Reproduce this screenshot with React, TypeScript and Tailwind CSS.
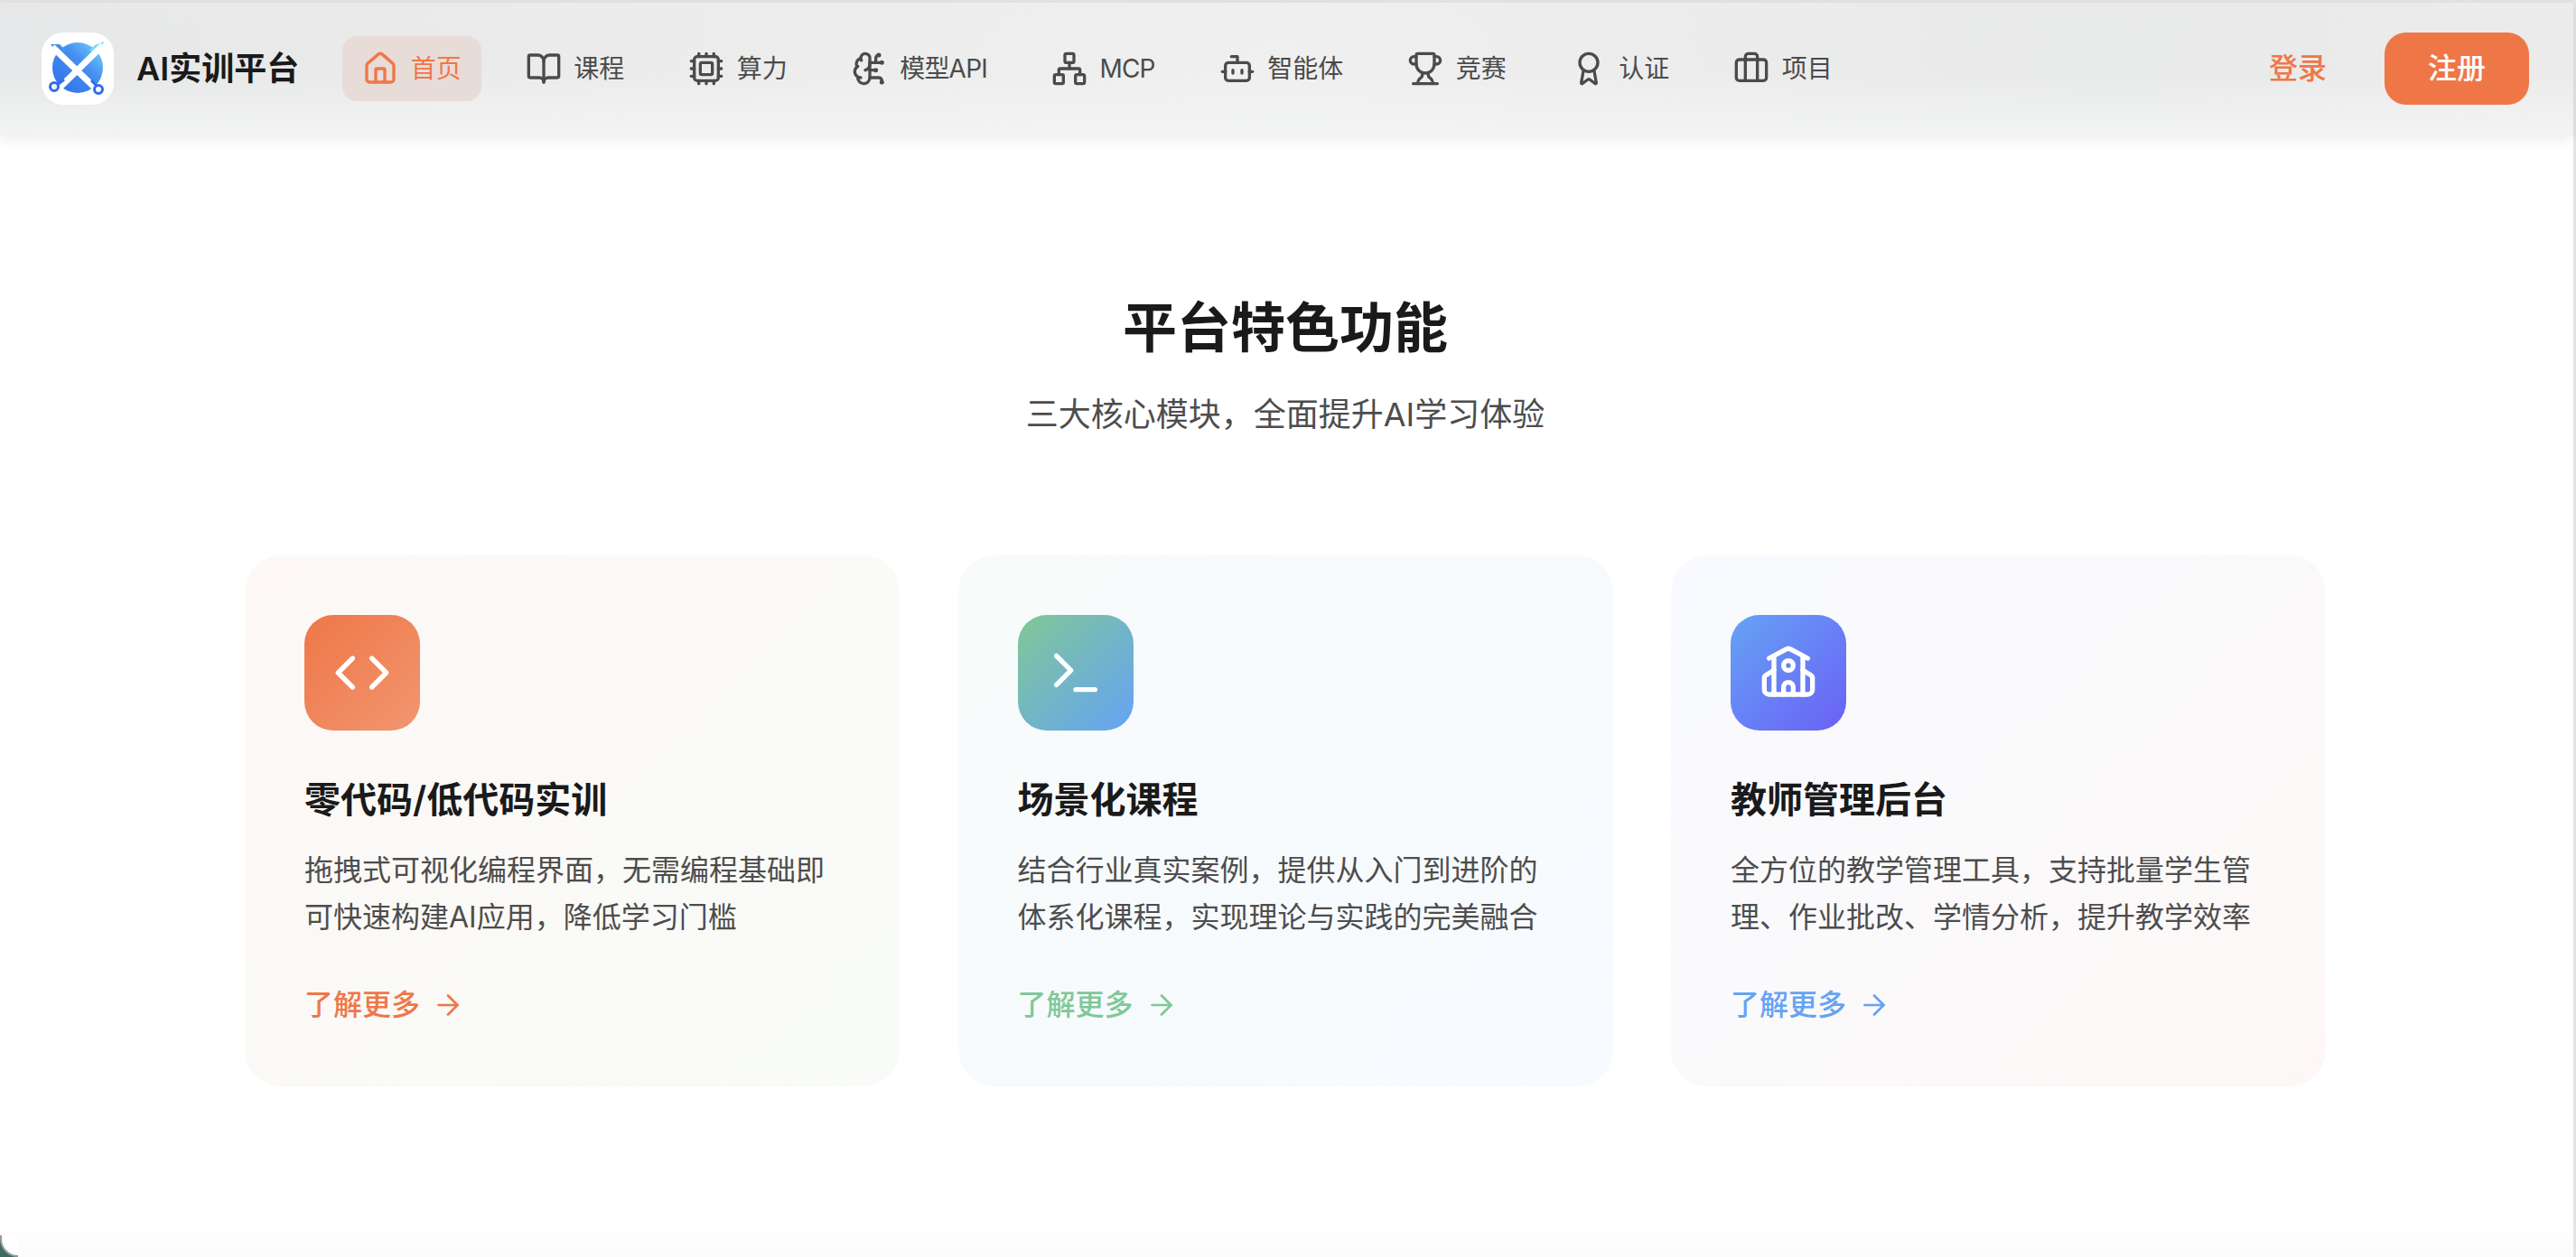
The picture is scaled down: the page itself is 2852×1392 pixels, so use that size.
import { House, BookOpen, Cpu, BrainCircuit, Network, Bot, Trophy, Award, Briefcase, Code, Terminal, School, ArrowRight } from "lucide-react";

const navItems = [
  { label: "首页", icon: House, active: true },
  { label: "课程", icon: BookOpen },
  { label: "算力", icon: Cpu },
  { label: "模型API", icon: BrainCircuit, narrow: true },
  { label: "MCP", icon: Network, narrow: true },
  { label: "智能体", icon: Bot },
  { label: "竞赛", icon: Trophy },
  { label: "认证", icon: Award },
  { label: "项目", icon: Briefcase },
];

const cards = [
  {
    title: "零代码/低代码实训",
    lines: ["拖拽式可视化编程界面，无需编程基础即", "可快速构建AI应用，降低学习门槛"],
    icon: Code,
    cardClass: "bg-[linear-gradient(135deg,#fdf8f6,#f8fbf8)]",
    iconClass: "bg-[linear-gradient(135deg,#ef7747,#f19670)]",
    linkClass: "text-[#ef7747]",
  },
  {
    title: "场景化课程",
    lines: ["结合行业真实案例，提供从入门到进阶的", "体系化课程，实现理论与实践的完美融合"],
    icon: Terminal,
    cardClass: "bg-[linear-gradient(135deg,#f8fbfa,#f7faff)]",
    iconClass: "bg-[linear-gradient(135deg,#80c896,#65a3f5)]",
    linkClass: "text-[#7fc898]",
  },
  {
    title: "教师管理后台",
    lines: ["全方位的教学管理工具，支持批量学生管", "理、作业批改、学情分析，提升教学效率"],
    icon: School,
    cardClass: "bg-[linear-gradient(135deg,#f8faff,#fdf8f6)]",
    iconClass: "bg-[linear-gradient(135deg,#65a3f5,#6b60f6)]",
    linkClass: "text-[#65a3f5]",
  },
];

function Logo() {
  return (
    <div className="flex h-[80px] w-[80px] shrink-0 items-center justify-center rounded-[24px] bg-white">
      <svg width="80" height="80" viewBox="0 0 80 80">
        <defs>
          <linearGradient id="logoBlue" x1="1" y1="0" x2="0" y2="1">
            <stop offset="0" stopColor="#7adcf8" />
            <stop offset="0.4" stopColor="#4590f0" />
            <stop offset="1" stopColor="#2f6de8" />
          </linearGradient>
        </defs>
        <circle cx="40" cy="39" r="28" fill="url(#logoBlue)" />
        <polygon points="10,13 20,13 27,20 18,24" fill="#4590f0" />
        <polygon points="69,10 59,14 53,20 63,24" fill="#7adcf8" />
        <path d="M12 16 L61 63" stroke="#fff" strokeWidth="7" fill="none" />
        <path d="M68 14 L18 63" stroke="#fff" strokeWidth="7" fill="none" />
        <path d="M25 52 L16 59" stroke="#2f6de8" strokeWidth="3" fill="none" />
        <path d="M55 53 L62 60" stroke="#2f6de8" strokeWidth="3" fill="none" />
        <circle cx="14" cy="60" r="4.5" fill="#fff" stroke="#2f6de8" strokeWidth="3" />
        <circle cx="63" cy="63" r="4.5" fill="#fff" stroke="#2f6de8" strokeWidth="3" />
      </svg>
    </div>
  );
}

export default function App() {
  return (
    <div className="relative h-[1392px] w-[2852px] overflow-hidden bg-[#e4e4e4] pt-[3px] pr-[3px] font-[Inter,'Noto_Sans_CJK_SC',sans-serif]">
      <div className="flex h-full flex-col bg-[linear-gradient(180deg,#ffffff_97%,#fbfbfb_100%)]">
        <header className="z-10 flex h-[147px] shrink-0 items-center justify-between bg-[linear-gradient(180deg,rgba(234,235,236,0.2)_0%,rgba(234,235,236,0.05)_55%,rgba(243,244,244,0.95)_100%),linear-gradient(90deg,#e6e7e8_0%,#ebebeb_20%,#f0f0f0_50%,#ededed_62%,#e8e9e9_82%,#ebecea_100%)] pr-[49px] pl-[46px] pb-[2px] shadow-[0_4px_14px_rgba(0,0,0,0.08)]">
          <div className="flex items-center">
            <Logo />
            <span className="ml-[25px] text-[36px] font-semibold leading-[56px] text-[#1a1a1a]">AI实训平台</span>
            <nav className="ml-[48px] flex items-center gap-[27px]">
              {navItems.map((item) => {
                const Icon = item.icon;
                return (
                  <div
                    key={item.label}
                    className={
                      item.active
                        ? "flex h-[72px] items-center gap-[13.5px] rounded-[16px] bg-[#e8dcd8] px-[22px] text-[28px] text-[#ef7747]"
                        : "flex h-[72px] items-center gap-[13.5px] rounded-[16px] px-[22px] text-[28px] text-[#4b4b4b]"
                    }
                  >
                    <Icon size={40} strokeWidth={2} />
                    <span className={item.narrow ? "tracking-[-0.8px]" : ""}>{item.label}</span>
                  </div>
                );
              })}
            </nav>
          </div>
          <div className="flex items-center gap-[64px]">
            <span className="text-[32px] font-medium text-[#ef7747]">登录</span>
            <button className="flex h-[80px] w-[160px] items-center justify-center rounded-[24px] bg-[#ef7747] text-[32px] font-medium text-white">
              注册
            </button>
          </div>
        </header>

        <main className="flex flex-col items-center pt-[177px] pr-[3px]">
          <h2 className="text-[60px] font-bold leading-[72px] text-[#1a1a1a]">平台特色功能</h2>
          <p className="mt-[32px] text-[36px] leading-[56px] text-[#4d4d4d]">三大核心模块，全面提升AI学习体验</p>
          <div className="mt-[128px] flex gap-[64.5px]">
            {cards.map((card) => {
              const Icon = card.icon;
              return (
                <div key={card.title} className={`h-[588px] w-[725px] rounded-[40px] p-[66px] ${card.cardClass}`}>
                  <div className={`flex h-[128px] w-[128px] items-center justify-center rounded-[32px] text-white ${card.iconClass}`}>
                    <Icon size={64} strokeWidth={2} />
                  </div>
                  <h3 className="mt-[49px] text-[40px] font-semibold leading-[56px] text-[#1a1a1a]">{card.title}</h3>
                  <div className="mt-[24px] text-[32px] leading-[52px] text-[#4d4d4d]">
                    {card.lines.map((line) => (
                      <p key={line}>{line}</p>
                    ))}
                  </div>
                  <div className={`mt-[47px] flex h-[48px] items-center gap-[13px] text-[32px] font-medium ${card.linkClass}`}>
                    <span>了解更多</span>
                    <ArrowRight size={36} strokeWidth={1.8} />
                  </div>
                </div>
              );
            })}
          </div>
        </main>
      </div>
      <div className="absolute bottom-0 left-0 h-[24px] w-[20px] bg-[#3f6b62]">
        <div className="h-full w-full rounded-bl-[20px] border-b-2 border-l-2 border-[#9a9a9a] bg-white" />
      </div>
    </div>
  );
}
